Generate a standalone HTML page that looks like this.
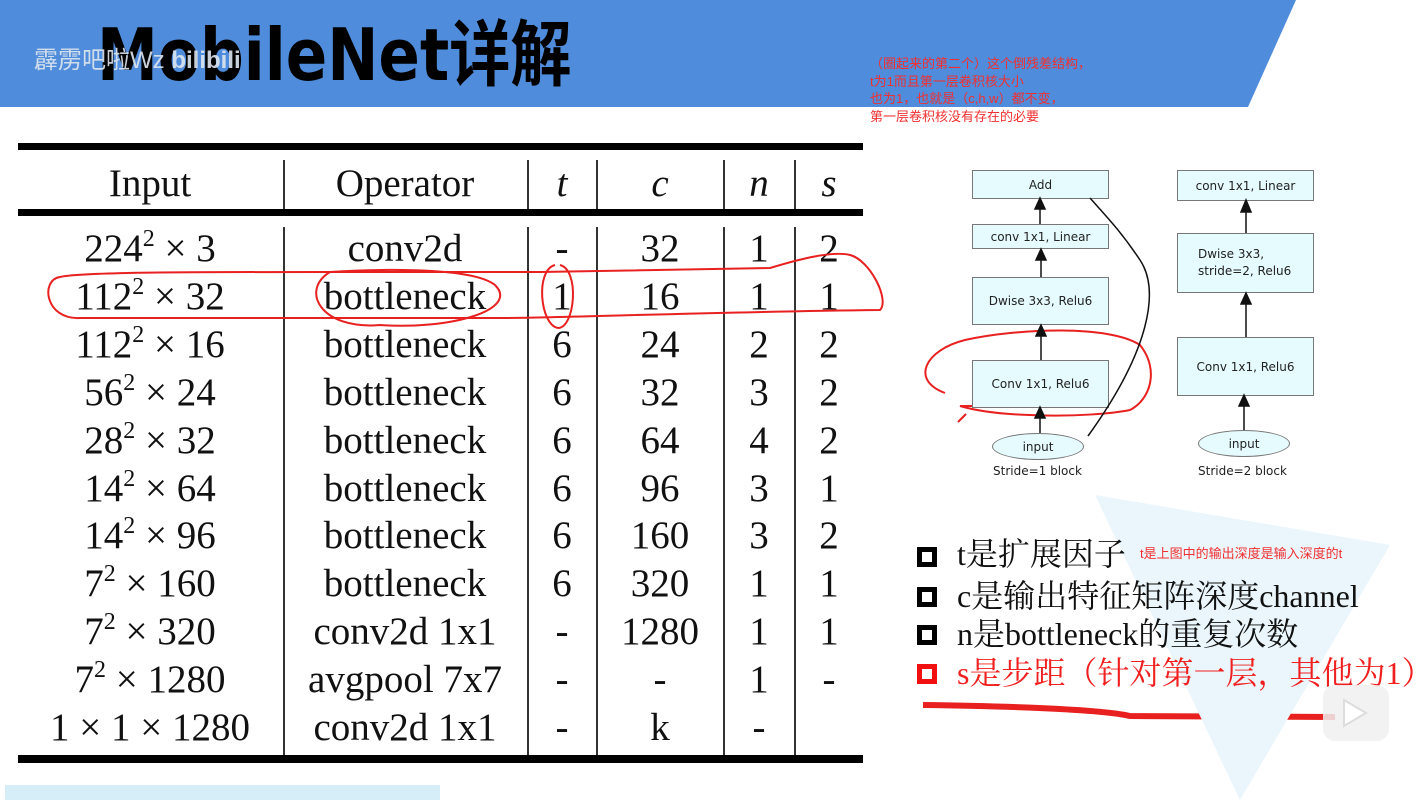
<!DOCTYPE html>
<html><head><meta charset="utf-8"><style>
*{margin:0;padding:0;box-sizing:border-box}
body{width:1421px;height:800px;overflow:hidden;background:#fff;position:relative;font-family:"Liberation Serif","Noto Serif CJK SC",serif}
.a{position:absolute}
.c{position:absolute;transform:translateX(-50%);white-space:nowrap;font-size:39px;line-height:40px;color:#111}
.hl{position:absolute;left:18px;width:845px;background:#000}
.vl{position:absolute;width:2px;background:#333}
.box{position:absolute;background:#e6fbfe;border:1.5px solid #777;font-family:"DejaVu Sans",sans-serif;font-size:12px;color:#222;display:flex;align-items:center;justify-content:center}
.bl{position:absolute;left:917px;font-size:32px;line-height:34px;color:#111;white-space:nowrap}
.sq{position:absolute;left:917px;width:20px;height:20px;border:5px solid #000}
</style></head><body>
<svg class="a" style="left:0;top:0" width="1421" height="110"><polygon points="0,0 1296,0 1248,107 0,107" fill="#4f8cdb"/></svg>
<div class="a" style="left:97px;top:10px;font-family:'DejaVu Sans','Noto Sans CJK SC',sans-serif;font-weight:bold;font-size:72px;line-height:90px;color:#000;transform:scaleX(0.85);transform-origin:left top;white-space:nowrap">MobileNet详解</div>
<div class="a" style="left:34px;top:40px;font-family:'Liberation Sans','Noto Sans CJK SC',sans-serif;font-size:24px;color:#dfe6f0;opacity:.9">霹雳吧啦Wz <span style="font-weight:bold">bilibili</span></div>
<div class="a" style="left:870px;top:55px;font-family:'Liberation Sans','Noto Sans CJK SC',sans-serif;font-size:13px;line-height:17.5px;color:#f03030">（圈起来的第二个）这个倒残差结构，<br>t为1而且第一层卷积核大小<br>也为1，也就是（c,h,w）都不变，<br>第一层卷积核没有存在的必要</div>

<div class="hl" style="top:143px;height:7px"></div>
<div class="hl" style="top:209px;height:7px"></div>
<div class="hl" style="top:755px;height:8px"></div>
<div class="vl" style="left:283px;top:160px;height:49px"></div><div class="vl" style="left:283px;top:227px;height:528px"></div>
<div class="vl" style="left:527px;top:160px;height:49px"></div><div class="vl" style="left:527px;top:227px;height:528px"></div>
<div class="vl" style="left:596px;top:160px;height:49px"></div><div class="vl" style="left:596px;top:227px;height:528px"></div>
<div class="vl" style="left:723px;top:160px;height:49px"></div><div class="vl" style="left:723px;top:227px;height:528px"></div>
<div class="vl" style="left:794px;top:160px;height:49px"></div><div class="vl" style="left:794px;top:227px;height:528px"></div>

<div class="c" style="left:150px;top:164px">Input</div>
<div class="c" style="left:405px;top:164px">Operator</div>
<div class="c" style="left:562px;top:164px;font-style:italic">t</div>
<div class="c" style="left:660px;top:164px;font-style:italic">c</div>
<div class="c" style="left:759px;top:164px;font-style:italic">n</div>
<div class="c" style="left:829px;top:164px;font-style:italic">s</div>

<div id="rows"></div>
<script>
var R=[["224<sup>2</sup> × 3","conv2d","-","32","1","2"],["112<sup>2</sup> × 32","bottleneck","1","16","1","1"],["112<sup>2</sup> × 16","bottleneck","6","24","2","2"],["56<sup>2</sup> × 24","bottleneck","6","32","3","2"],["28<sup>2</sup> × 32","bottleneck","6","64","4","2"],["14<sup>2</sup> × 64","bottleneck","6","96","3","1"],["14<sup>2</sup> × 96","bottleneck","6","160","3","2"],["7<sup>2</sup> × 160","bottleneck","6","320","1","1"],["7<sup>2</sup> × 320","conv2d 1x1","-","1280","1","1"],["7<sup>2</sup> × 1280","avgpool 7x7","-","-","1","-"],["1 × 1 × 1280","conv2d 1x1","-","k","-",""]];
var X=[150,405,562,660,759,829],h="";
R.forEach(function(r,i){var y=229+i*47.9;r.forEach(function(t,j){h+='<div class="c" style="left:'+X[j]+'px;top:'+y+'px">'+t.replace(/<sup>/g,'<sup style="font-size:24px;vertical-align:15px;line-height:0">')+'</div>'})});
document.getElementById('rows').innerHTML=h;
</script>

<svg class="a" style="left:0;top:0" width="1421" height="800" fill="none" stroke="#e82020" stroke-width="2">
<path d="M60,277 C40,280 45,320 80,318 L500,318 C560,318 700,312 880,310 C890,300 870,260 850,255 C830,250 790,262 770,268 L540,272 L330,272 C190,272 80,272 60,277Z"/>
<path d="M330,272 C300,290 320,330 380,325 C450,330 520,310 495,285 C470,265 360,270 330,272"/>
<path d="M555,265 C535,270 540,325 558,328 C575,328 580,270 560,265"/>
<path d="M945,393 C910,380 925,350 965,340 C1020,328 1110,325 1140,345 C1160,370 1150,400 1130,410 C1090,418 1000,418 960,406 L1035,406"/>
<path d="M923,705 C1000,706 1100,709 1130,716 L1335,717" stroke-width="6"/>
<path d="M958,422 L966,414"/>
</svg>

<div class="box" style="left:972px;top:170px;width:137px;height:29px">Add</div>
<div class="box" style="left:972px;top:224px;width:137px;height:25px">conv 1x1, Linear</div>
<div class="box" style="left:972px;top:277px;width:137px;height:48px">Dwise 3x3, Relu6</div>
<div class="box" style="left:972px;top:360px;width:137px;height:48px">Conv 1x1, Relu6</div>
<div class="box" style="left:992px;top:433px;width:92px;height:27px;border-radius:50%">input</div>
<div class="a" style="left:993px;top:464px;font-family:'DejaVu Sans',sans-serif;font-size:12px;color:#222">Stride=1 block</div>
<div class="box" style="left:1177px;top:170px;width:137px;height:31px">conv 1x1, Linear</div>
<div class="box" style="left:1177px;top:233px;width:137px;height:60px;justify-content:flex-start;padding-left:20px;line-height:17px">Dwise 3x3,<br>stride=2, Relu6</div>
<div class="box" style="left:1177px;top:337px;width:137px;height:59px">Conv 1x1, Relu6</div>
<div class="box" style="left:1198px;top:430px;width:92px;height:27px;border-radius:50%">input</div>
<div class="a" style="left:1198px;top:464px;font-family:'DejaVu Sans',sans-serif;font-size:12px;color:#222">Stride=2 block</div>
<svg class="a" style="left:0;top:0" width="1421" height="800" stroke="#111" stroke-width="1.5" fill="#111">
<line x1="1040" y1="433" x2="1040" y2="410"/><polygon points="1035,418 1045,418 1040,407"/>
<line x1="1041" y1="360" x2="1041" y2="327"/><polygon points="1036,336 1046,336 1041,325"/>
<line x1="1041" y1="277" x2="1041" y2="251"/><polygon points="1036,260 1046,260 1041,249"/>
<line x1="1040" y1="224" x2="1040" y2="200"/><polygon points="1035,209 1045,209 1040,198"/>
<line x1="1244" y1="430" x2="1244" y2="398"/><polygon points="1239,406 1249,406 1244,395"/>
<line x1="1246" y1="337" x2="1246" y2="295"/><polygon points="1241,304 1251,304 1246,293"/>
<line x1="1246" y1="233" x2="1246" y2="203"/><polygon points="1241,212 1251,212 1246,200"/>
<path d="M1088,436 C1150,350 1160,290 1140,260 C1120,230 1105,215 1090,198" fill="none"/>
</svg>

<svg class="a" style="left:1090px;top:495px" width="300" height="305"><polygon points="5,0 300,50 150,305" fill="#eaf6fc"/></svg>
<div class="sq" style="top:547px"></div>
<div class="bl" style="left:957px;top:537px">t是扩展因子</div>
<div class="a" style="left:1140px;top:543px;font-family:'Liberation Sans','Noto Sans CJK SC',sans-serif;font-size:13px;color:#f03030">t是上图中的输出深度是输入深度的t</div>
<div class="sq" style="top:587px"></div>
<div class="bl" style="left:957px;top:579px">c是输出特征矩阵深度channel</div>
<div class="sq" style="top:625px"></div>
<div class="bl" style="left:957px;top:617px">n是bottleneck的重复次数</div>
<div class="sq" style="top:664px;border-color:#f01010"></div>
<div class="bl" style="left:957px;top:656px;color:#f02020">s是步距（针对第一层，其他为1）</div>
<div class="a" style="left:1323px;top:685px;width:66px;height:56px;border-radius:12px;background:rgba(240,240,240,.85)"></div>
<svg class="a" style="left:1340px;top:697px" width="30" height="32"><path d="M4,3 L26,16 L4,29Z" fill="#fff" stroke="#ddd" stroke-width="2"/></svg>
<div class="a" style="left:5px;top:785px;width:435px;height:15px;background:#d5eef8"></div>
</body></html>
